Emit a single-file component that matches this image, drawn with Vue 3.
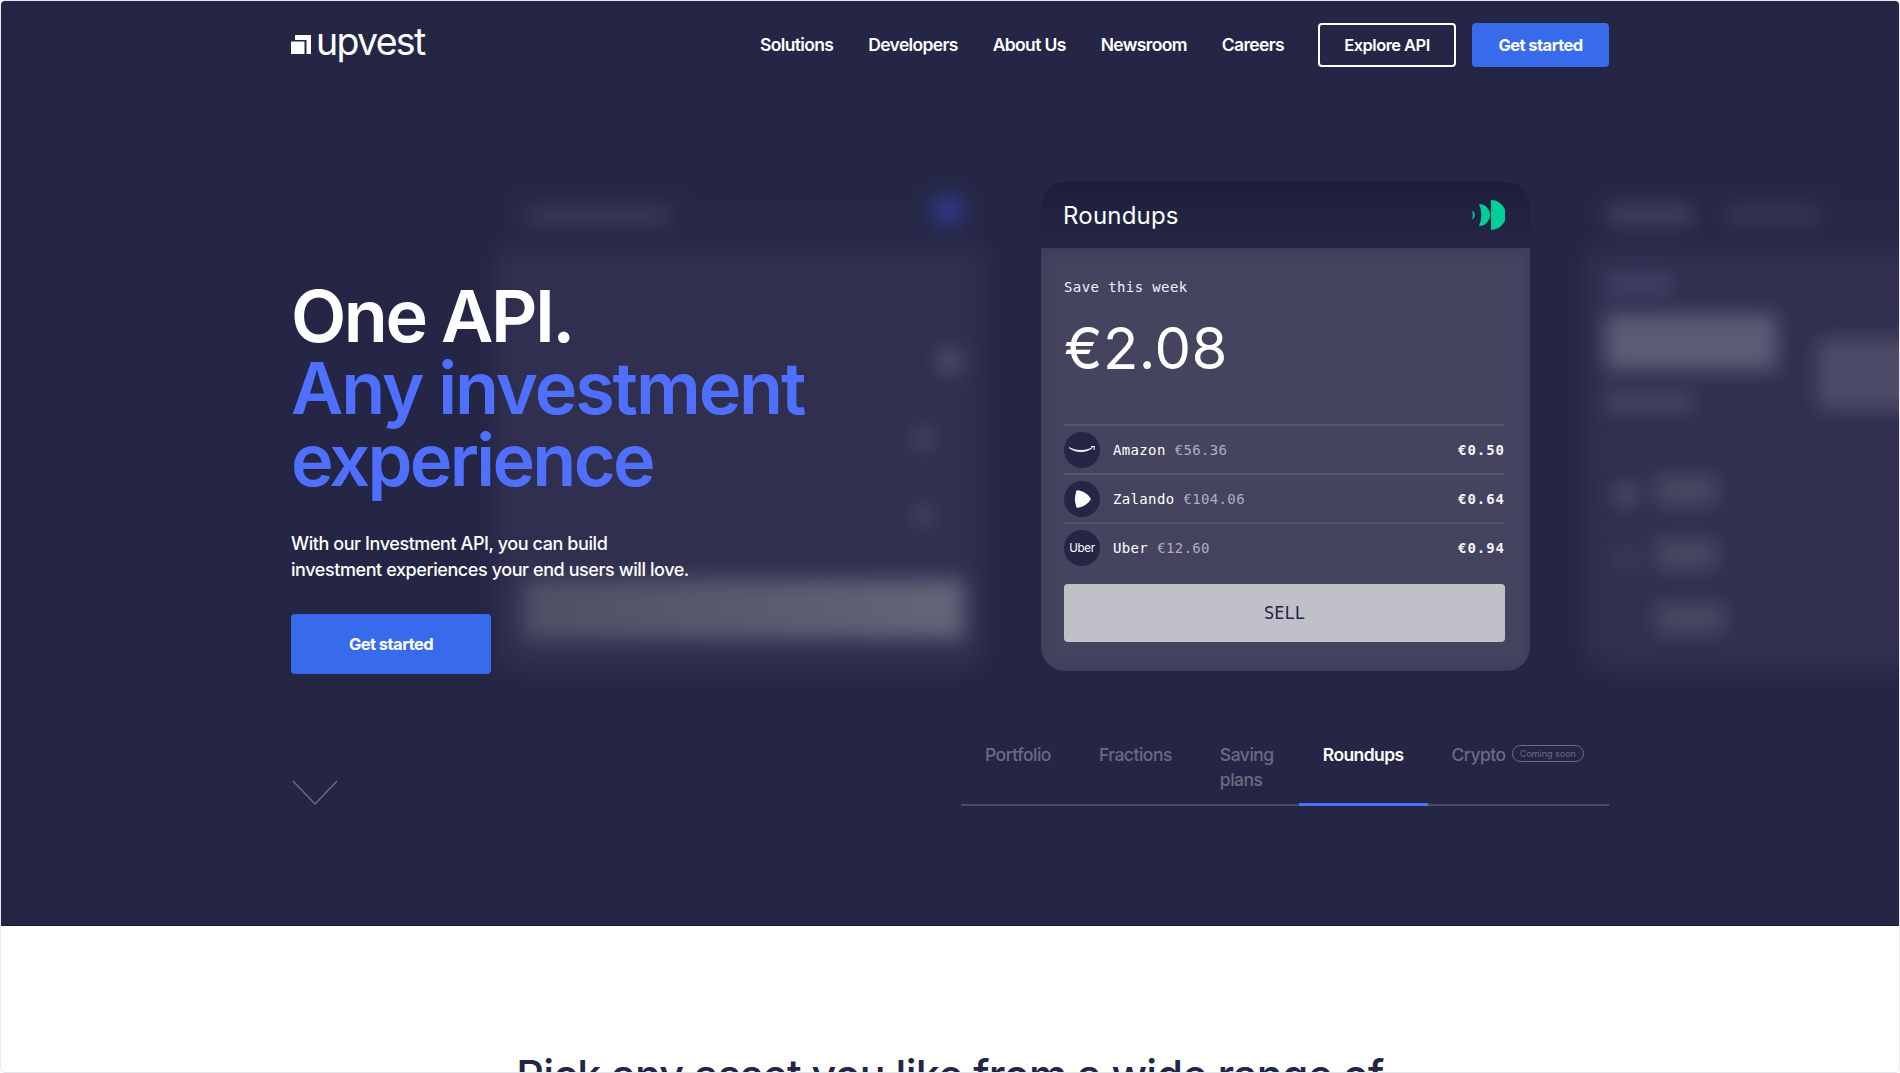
<script setup>
const navLinks = ['Solutions', 'Developers', 'About Us', 'Newsroom', 'Careers']

const rows = [
  { name: 'Amazon', price: '€56.36', round: '€0.50', icon: 'amazon' },
  { name: 'Zalando', price: '€104.06', round: '€0.64', icon: 'zalando' },
  { name: 'Uber', price: '€12.60', round: '€0.94', icon: 'uber' }
]

const tabs = [
  { id: 'portfolio', label: 'Portfolio' },
  { id: 'fractions', label: 'Fractions' },
  { id: 'saving', label: 'Saving plans' },
  { id: 'roundups', label: 'Roundups', active: true },
  { id: 'crypto', label: 'Crypto', badge: 'Coming soon' }
]
</script>

<template>
  <div class="page">
    <section class="hero">
      <header class="nav">
        <a class="logo">
          <svg class="logo-mark" viewBox="0 0 20 19" aria-hidden="true">
            <path d="M4 0H20V19H15.500V5H4Z M0 6.500H13.500V19H0Z" fill="#fff" />
          </svg>
          <span class="logo-text">upvest</span>
        </a>
        <nav class="nav-links">
          <a v-for="link in navLinks" :key="link">{{ link }}</a>
        </nav>
        <a class="btn btn-outline">Explore API</a>
        <a class="btn btn-blue">Get started</a>
      </header>

      <div class="hero-main">
        <div class="intro">
          <h1>One API.<br /><span>Any investment</span><br /><span class="tight">experience</span></h1>
          <p>With our Investment API, you can build<br />investment experiences your end users will love.</p>
          <a class="btn btn-blue btn-large">Get started</a>
        </div>

        <div class="stage">
          <!-- 左右两张是轮播里未选中的卡片，只显示模糊的轮廓 -->
          <div class="ghost ghost-left">
            <div class="ghost-head">
              <i class="g-title"></i>
              <i class="g-dot-blue"></i>
            </div>
            <div class="ghost-body">
              <i class="g-dot g-dot-1"></i>
              <i class="g-dot g-dot-2"></i>
              <i class="g-dot g-dot-3"></i>
              <i class="g-bar"></i>
            </div>
          </div>

          <div class="card">
            <div class="card-head">
              <span>Roundups</span>
              <svg class="card-mark" viewBox="0 0 33 30" aria-hidden="true">
                <path d="M19 0A15 15 0 0 1 19 30Z" fill="#00cf95" />
                <path d="M7 4A11 11 0 0 1 7 26C10 19 10 11 7 4Z" fill="#00cf95" />
                <path d="M0 10.500A5 5 0 0 1 0 19.500C1 17 1 13 0 10.500Z" fill="#00cf95" />
              </svg>
            </div>
            <div class="card-body">
              <div class="label">Save this week</div>
              <div class="amount">€2.08</div>
              <ul class="rows">
                <li v-for="row in rows" :key="row.name" class="row">
                  <span class="avatar">
                    <svg v-if="row.icon === 'amazon'" viewBox="0 0 36 36" aria-hidden="true">
                      <path d="M5 15.500C12 19.500 22 19.500 28.500 15.500C23 21 11 21 5 15.500Z" fill="#fff" stroke="#fff" stroke-width=".8" />
                      <path d="M27 14.500L30.500 14.500L30 18" fill="none" stroke="#fff" stroke-width="1" />
                    </svg>
                    <svg v-else-if="row.icon === 'zalando'" viewBox="0 0 36 36" aria-hidden="true">
                      <path d="M12 11.500C12 9.500 13 9 15 9.500C20 10.500 24 13.500 26 16.500C27 17.500 27 18.500 26 19.500C24 22.500 20 25.500 15 26.500C13 27 12 26.500 12 24.500C10.500 20 10.500 16 12 11.500Z" fill="#fff" />
                    </svg>
                    <span v-else class="uber">Uber</span>
                  </span>
                  <span class="row-name">{{ row.name }}</span>
                  <span class="row-price">{{ row.price }}</span>
                  <span class="row-round">{{ row.round }}</span>
                </li>
              </ul>
              <button class="sell">SELL</button>
            </div>
          </div>

          <div class="ghost ghost-right">
            <div class="ghost-head ghost-head-right">
              <i class="g-tab"></i>
              <i class="g-tab g-tab-dim"></i>
            </div>
            <div class="ghost-body ghost-body-right">
              <i class="g-label"></i>
              <i class="g-value"></i>
              <i class="g-sub"></i>
              <i class="g-chart"></i>
              <div class="g-list">
                <div class="g-line"><i class="g-bullet"></i><i class="g-text"></i></div>
                <div class="g-line"><i class="g-bullet g-bullet-dim"></i><i class="g-text"></i></div>
                <div class="g-line"><i class="g-bullet g-bullet-none"></i><i class="g-text g-text-wide"></i></div>
              </div>
            </div>
          </div>
        </div>
      </div>

      <div class="hero-foot">
        <svg class="chevron" viewBox="0 0 46 26" aria-hidden="true">
          <path d="M1 1L23 24L45 1" fill="none" stroke="#6a6a80" stroke-width="1.400" />
        </svg>
        <div class="tabs">
          <div
            v-for="tab in tabs"
            :key="tab.id"
            class="tab"
            :class="['tab-' + tab.id, { 'tab-active': tab.active }]"
          >
            <span>{{ tab.label }}</span>
            <em v-if="tab.badge">{{ tab.badge }}</em>
          </div>
        </div>
      </div>
    </section>

    <section class="assets">
      <h2>Pick any asset you like from a wide range of</h2>
    </section>
  </div>
</template>

<style>
html,
body {
  margin: 0;
  background: #fff;
}
</style>

<style scoped>
.page {
  height: 1073px;
  overflow: hidden;
  font-family: Inter, "Liberation Sans", sans-serif;
  border: 1px solid #e8e8ee;
  border-bottom-color: #e4e4ea;
  box-sizing: border-box;
  border-radius: 5px;
}

.hero {
  background: #252645;
  height: 925px;
  overflow: hidden;
  box-sizing: border-box;
  padding: 22px 290px 0;
  border-bottom: 1px solid #1b1b38;
}

.nav {
  display: flex;
  align-items: center;
  height: 44px;
}

.logo {
  display: flex;
  align-items: center;
  gap: 5px;
  margin-right: auto;
  color: #fff;
}

.logo-mark {
  width: 20px;
  height: 19px;
  margin-top: -2px;
}

.logo-text {
  font-size: 37.500px;
  font-weight: 400;
  letter-spacing: -1.7px;
  line-height: 44px;
  margin-top: -6px;
}

.nav-links {
  display: flex;
  gap: 35px;
  margin: -2px 34px 0 0;
  color: #fff;
  font-size: 17.500px;
  font-weight: 600;
  letter-spacing: -0.65px;
}

.btn {
  display: flex;
  align-items: center;
  justify-content: center;
  box-sizing: border-box;
  height: 44px;
  border-radius: 4px;
  color: #fff;
  font-size: 16.500px;
  font-weight: 700;
  letter-spacing: -0.55px;
}

.btn-outline {
  width: 138px;
  border: 2px solid #fff;
  margin-right: 16px;
  font-weight: 600;
}

.btn-blue {
  width: 137px;
  background: #386bec;
}

.btn-large {
  width: 200px;
  height: 60px;
  margin-top: 31px;
  position: relative;
  z-index: 2;
}

.hero-main {
  display: flex;
  margin-top: 115px;
  height: 489px;
}

.intro {
  flex: 0 0 750px;
  padding-top: 98px;
  position: relative;
  z-index: 2;
  color: #fff;
}

h1 {
  margin: 0;
  font-size: 72px;
  font-weight: 600;
  line-height: 72px;
  letter-spacing: -2.5px;
}

h1 span {
  color: #4f70ff;
  letter-spacing: -2.1px;
}

h1 .tight {
  letter-spacing: -2.7px;
}

.intro p {
  margin: 35px 0 0;
  font-size: 18px;
  font-weight: 500;
  line-height: 26px;
  letter-spacing: -0.42px;
}

.stage {
  display: flex;
  flex: none;
  gap: 55px;
  margin-left: -544px;
}

.card,
.ghost {
  flex: none;
  width: 489px;
  height: 489px;
  border-radius: 24px;
  overflow: hidden;
  box-sizing: border-box;
}

.ghost {
  filter: blur(10px);
}

.card-head,
.ghost-head {
  height: 66px;
}

.ghost-head {
  background: #262745;
}

.card-head {
  display: flex;
  align-items: center;
  justify-content: space-between;
  padding: 0 25px 0 22px;
  background: linear-gradient(#1d1d3e, #252645);
  color: #fff;
  font-size: 24px;
  letter-spacing: 0.2px;
}

.card-mark {
  width: 33px;
  height: 30px;
}

.card-body {
  height: 423px;
  box-sizing: border-box;
  background: #45445f;
  box-shadow: inset 0 0 14px rgba(37, 38, 69, 0.3);
  padding: 29px 25px 0 23px;
}

.label,
.row,
.sell {
  font-family: "DejaVu Sans Mono", "Liberation Mono", monospace;
}

.label {
  color: #f0f0f4;
  font-size: 14px;
  line-height: 20px;
  letter-spacing: 0.4px;
}

.amount {
  margin-top: 17px;
  color: #fff;
  font-size: 58px;
  line-height: 68px;
  letter-spacing: 0.4px;
}

.rows {
  list-style: none;
  margin: 42px 0 0;
  padding: 0;
}

.row {
  display: flex;
  align-items: center;
  height: 49px;
  border-top: 2px solid #55546f;
  box-sizing: border-box;
  font-size: 14px;
  letter-spacing: 0.35px;
}

.avatar {
  display: flex;
  align-items: center;
  justify-content: center;
  flex: none;
  width: 36px;
  height: 36px;
  margin-right: 13px;
  border-radius: 50%;
  background: #252645;
}

.avatar svg {
  width: 36px;
  height: 36px;
}

.uber {
  color: #fff;
  font-family: Inter, "Liberation Sans", sans-serif;
  font-size: 11.500px;
  letter-spacing: -0.3px;
}

.row-name {
  color: #fff;
}

.row-price {
  margin-left: 9px;
  color: #aeaeba;
}

.row-round {
  margin-left: auto;
  color: #f4f4f6;
  font-weight: 700;
  letter-spacing: 0.95px;
}

.sell {
  display: block;
  width: 100%;
  height: 58px;
  margin-top: 13px;
  padding: 0;
  border: none;
  border-radius: 4px;
  background: #c0c0c9;
  color: #252645;
  font-size: 17px;
}

/* 模糊卡片的内容 */
.ghost-body {
  position: relative;
  height: 423px;
  background: #302f4f;
}

.ghost-head {
  position: relative;
}

.ghost i {
  position: absolute;
  display: block;
}

.g-title {
  left: 28px;
  top: 26px;
  width: 146px;
  height: 16px;
  background: #3e3d58;
}

.g-dot-blue {
  right: 22px;
  top: 12px;
  width: 32px;
  height: 32px;
  border-radius: 50%;
  background: #2f3a8c;
}

.g-dot {
  width: 24px;
  height: 24px;
  border-radius: 50%;
  background: #55556c;
}

.g-dot-1 {
  right: 25px;
  top: 101px;
}

.g-dot-2 {
  right: 51px;
  top: 179px;
  background: #46465f;
}

.g-dot-3 {
  right: 51px;
  top: 255px;
  background: #44445e;
}

.g-bar {
  left: 26px;
  right: 22px;
  top: 331px;
  height: 60px;
  border-radius: 4px;
  background: linear-gradient(90deg, #4f4f66, #64647a);
}

.ghost-head-right .g-tab {
  left: 22px;
  top: 24px;
  width: 86px;
  height: 18px;
  background: #454560;
}

.ghost-head-right .g-tab-dim {
  left: 140px;
  width: 96px;
  background: #393955;
}

.g-label {
  left: 22px;
  top: 28px;
  width: 66px;
  height: 16px;
  background: #46466a;
}

.g-value {
  left: 20px;
  top: 66px;
  width: 172px;
  height: 56px;
  background: #5c5c76;
}

.g-sub {
  left: 20px;
  top: 146px;
  width: 88px;
  height: 16px;
  background: #4c4c68;
}

.g-chart {
  left: 232px;
  top: 90px;
  width: 200px;
  height: 72px;
  background: #4c4c68;
  border-radius: 8px;
}

.g-list {
  position: absolute;
  left: 30px;
  top: 226px;
}

.g-line {
  position: relative;
  height: 64px;
}

.ghost .g-bullet {
  left: 0;
  top: 10px;
  width: 22px;
  height: 22px;
  border-radius: 50%;
  background: #54546c;
}

.ghost .g-bullet-dim {
  background: #40405c;
}

.ghost .g-bullet-none {
  background: transparent;
}

.ghost .g-text {
  left: 40px;
  top: 0;
  width: 62px;
  height: 32px;
  background: #484862;
}

.ghost .g-text-wide {
  width: 70px;
}

/* 底部：箭头和标签栏 */
.hero-foot {
  display: flex;
  justify-content: space-between;
  align-items: flex-end;
  margin-top: 71px;
}

.chevron {
  width: 46px;
  height: 26px;
  margin-left: 1px;
}

.tabs {
  display: flex;
  width: 648px;
  border-bottom: 2px solid #4c4c66;
}

.tab {
  box-sizing: border-box;
  padding: 0 24px 14px;
  color: #6b6b82;
  font-size: 17.500px;
  font-weight: 500;
  line-height: 25px;
  letter-spacing: -0.5px;
  margin-bottom: -2px;
}

.tab-saving {
  width: 103px;
}

.tab-active {
  color: #fff;
  font-weight: 600;
  letter-spacing: -0.6px;
  border-bottom: 3px solid #4f70ff;
}

.tab-crypto {
  display: flex;
  align-items: flex-start;
  gap: 6px;
  padding-right: 0;
}

.tab em {
  margin-top: 3px;
  padding: 0 7px;
  border: 1px solid #6b6b82;
  border-radius: 9px;
  font-size: 9px;
  font-style: normal;
  font-weight: 400;
  line-height: 15px;
  letter-spacing: 0;
  white-space: nowrap;
}

.assets {
  padding-top: 125px;
  text-align: center;
}

h2 {
  margin: 0;
  color: #252645;
  font-size: 43px;
  font-weight: 500;
  line-height: 48px;
  letter-spacing: -0.77px;
}
</style>
